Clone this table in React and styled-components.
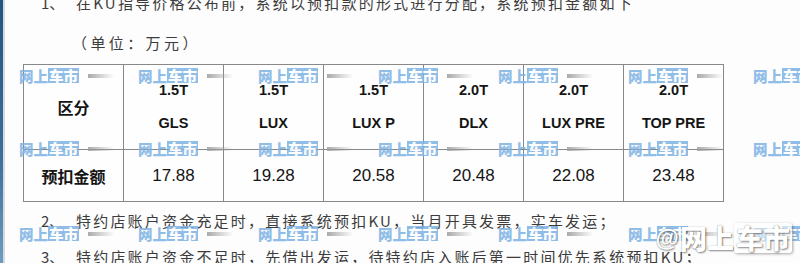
import React from "react";
import styled, { createGlobalStyle } from "styled-components";

const GlobalStyle = createGlobalStyle`
  html, body {
    margin: 0;
    padding: 0;
    background: #fdfdfd;
    overflow: hidden;
  }
`;

const models = [
  { engine: "1.5T", trim: "GLS", price: "17.88" },
  { engine: "1.5T", trim: "LUX", price: "19.28" },
  { engine: "1.5T", trim: "LUX P", price: "20.58" },
  { engine: "2.0T", trim: "DLX", price: "20.48" },
  { engine: "2.0T", trim: "LUX PRE", price: "22.08" },
  { engine: "2.0T", trim: "TOP PRE", price: "23.48" },
];

// 水印位置（照片里的平铺水印）
const markRows = [68, 141, 226];
const markCols = [19, 138, 258, 378, 498, 628, 753];

const App = () => {
  return (
    <Page>
      <GlobalStyle />
      <Edge />
      <Sheet>
        <Para $top={-8} $spacing={2.2}>
          <Num>1、</Num>
          在KU指导价格公布前，系统以预扣款的形式进行分配，系统预扣金额如下
        </Para>
        <Para $top={20} $spacing={3.4}>
          <Num $shift={-4} />
          （单位：万元）
        </Para>
        <Table>
          <tbody>
            <HeadRow>
              <LabelCell>区分</LabelCell>
              {models.map((m) => (
                <HeadCell key={m.trim}>
                  {m.engine}
                  <br />
                  {m.trim}
                </HeadCell>
              ))}
            </HeadRow>
            <DataRow>
              <LabelCell>预扣金额</LabelCell>
              {models.map((m) => (
                <ValueCell key={m.trim}>{m.price}</ValueCell>
              ))}
            </DataRow>
          </tbody>
        </Table>
        <Para $top={8} $spacing={2.2}>
          <Num>2、</Num>
          特约店账户资金充足时，直接系统预扣KU，当月开具发票，实车发运；
        </Para>
        <Para $top={16} $spacing={2.2}>
          <Num>3、</Num>
          特约店账户资金不足时，先借出发运，待特约店入账后第一时间优先系统预扣KU；
        </Para>
      </Sheet>
      <Overlay>
        {markRows.map((y) =>
          markCols.map((x) => (
            <Mark key={`${x}-${y}`} $x={x} $y={y}>
              <MarkText>网上</MarkText>
              <MarkBox>车市</MarkBox>
              <MarkDash />
            </Mark>
          ))
        )}
        <Logo>
          <At>@</At>
          <LogoText>网上</LogoText>
          <LogoBox>车市</LogoBox>
        </Logo>
      </Overlay>
    </Page>
  );
};

const Page = styled.div`
  position: relative;
  display: flex;
  width: 800px;
  height: 263px;
  overflow: hidden;
  font-family: "Liberation Sans", "Noto Sans CJK SC", sans-serif;
`;

const Edge = styled.div`
  width: 5px;
  flex-shrink: 0;
  background: linear-gradient(to bottom, #24557d, #3d6f98 60%, #6d9cc0);
  border-right: 2px solid #d6dade;
  box-sizing: border-box;
`;

const Sheet = styled.div`
  flex: 1;
  padding-left: 18px;
  display: flex;
  flex-direction: column;
  align-items: flex-start;
`;

const Para = styled.div`
  margin-top: ${(p) => p.$top}px;
  display: flex;
  align-items: center;
  height: 20px;
  font-family: "Noto Sans CJK SC", sans-serif;
  font-size: 15px;
  letter-spacing: ${(p) => p.$spacing}px;
  color: #3c3c3c;
  white-space: nowrap;
`;

const Num = styled.span`
  width: ${(p) => 53 + (p.$shift || 0)}px;
  padding-left: 18px;
  box-sizing: border-box;
  letter-spacing: 0;
  flex-shrink: 0;
`;

const Table = styled.table`
  margin-top: 12px;
  border-collapse: collapse;
  border: 1.5px solid #858585;
  background: #fefefe;

  td {
    border: 1px solid #888;
    width: 99px;
    padding: 0;
    text-align: center;
    vertical-align: middle;
    color: #151515;
  }
`;

const HeadRow = styled.tr`
  height: 85px;
`;

const DataRow = styled.tr`
  height: 52px;
`;

const LabelCell = styled.td`
  font-family: "Noto Sans CJK SC", sans-serif;
  font-weight: 700;
  font-size: 16px;
`;

const HeadCell = styled.td`
  font-weight: 700;
  font-size: 14.5px;
  line-height: 33px;
`;

const ValueCell = styled.td`
  font-size: 17px;
`;

const Overlay = styled.div`
  position: absolute;
  inset: 0;
  pointer-events: none;
`;

const Mark = styled.div`
  position: absolute;
  left: ${(p) => p.$x}px;
  top: ${(p) => p.$y}px;
  display: flex;
  align-items: center;
  height: 15px;
  white-space: nowrap;
  font-family: "Noto Sans CJK SC", sans-serif;
  font-weight: 900;
  font-size: 14.5px;
  opacity: 0.85;
`;

const MarkText = styled.span`
  color: #7eb3e4;
  line-height: 15px;
`;

const MarkBox = styled.span`
  color: #fff;
  background: #7eb3e4;
  line-height: 15px;
  padding: 0 1px;
`;

const MarkDash = styled.span`
  flex-shrink: 0;
  width: 26px;
  height: 4px;
  margin-left: 9px;
  background: linear-gradient(to right, #9c9c9c, rgba(170, 170, 170, 0));
`;

const Logo = styled.div`
  position: absolute;
  right: 8px;
  bottom: 10px;
  display: flex;
  align-items: center;
  white-space: nowrap;
  font-family: "Noto Sans CJK SC", sans-serif;
  font-weight: 900;
  color: #fff;
  text-shadow: 1px 1px 2px rgba(0, 0, 0, 0.45), 0 0 1px rgba(0, 0, 0, 0.4);
`;

const At = styled.span`
  font-family: "Liberation Sans", sans-serif;
  font-size: 24px;
  margin-right: 1px;
`;

const LogoText = styled.span`
  font-size: 27px;
  line-height: 30px;
`;

const LogoBox = styled.span`
  font-size: 27px;
  line-height: 30px;
  padding: 0 2px;
  border-radius: 3px;
  background: rgba(255, 255, 255, 0.55);
  box-shadow: 1px 1px 3px rgba(0, 0, 0, 0.35);
`;

export default App;
